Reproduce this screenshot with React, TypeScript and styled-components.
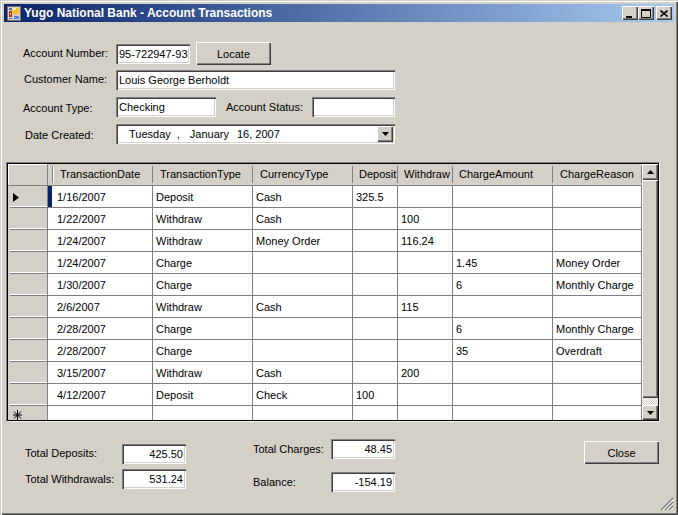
import { Fragment } from "react";
import { createGlobalStyle, styled } from "styled-components";

const GlobalStyle = createGlobalStyle`
  html, body {
    margin: 0;
    padding: 0;
    background: #d4d0c8;
  }
  body {
    font-family: "Liberation Sans", Arial, sans-serif;
    font-size: 11px;
    color: #000;
  }
`;

const raised = `
  background: #d4d0c8;
  box-shadow: inset 1px 1px 0 #fff, inset -1px -1px 0 #404040, inset -2px -2px 0 #808080;
`;

const Window = styled.div`
  position: relative;
  box-sizing: border-box;
  width: 678px;
  height: 515px;
  padding: 3px 2px 1px 3px;
  background: #d4d0c8;
  box-shadow: inset 1px 1px 0 #d4d0c8, inset 2px 2px 0 #fff, inset -1px -1px 0 #404040, inset -2px -2px 0 #808080;
  display: flex;
  flex-direction: column;
`;

const TitleBar = styled.div`
  margin: 1px 0 0 1px;
  width: 670px;
  height: 18px;
  flex: none;
  display: flex;
  align-items: center;
  padding-left: 3px;
  box-sizing: border-box;
  background: linear-gradient(to right, #0a246a, #a6caf0);
`;

const Title = styled.span`
  margin-left: 3px;
  font-size: 12px;
  font-weight: bold;
  color: #fff;
  white-space: nowrap;
  flex: 1;
`;

const CaptionButtons = styled.div`
  display: flex;
  margin-right: 2px;
`;

const CaptionButton = styled.div<{ $gap?: number }>`
  ${raised}
  width: 16px;
  height: 14px;
  margin-left: ${(p) => p.$gap ?? 0}px;
  display: flex;
  align-items: center;
  justify-content: center;
`;

const Form = styled.div`
  padding: 20px 0 0 1px;
  display: flex;
  flex-direction: column;
  height: 140px;
  box-sizing: border-box;
  flex: none;
`;

const FormRow = styled.div<{ $top?: number; $height?: number }>`
  display: flex;
  align-items: center;
  height: ${(p) => p.$height ?? 20}px;
  margin-top: ${(p) => p.$top ?? 0}px;
`;

const Label = styled.label<{ $left: number; $width: number; $nudge?: number }>`
  box-sizing: border-box;
  width: ${(p) => p.$width}px;
  padding-left: ${(p) => p.$left}px;
  margin-top: ${(p) => p.$nudge ?? 0}px;
  white-space: nowrap;
  flex: none;
`;

const TextBox = styled.div<{ $width: number; $right?: boolean }>`
  box-sizing: border-box;
  width: ${(p) => p.$width}px;
  height: 20px;
  flex: none;
  padding: 0 ${(p) => (p.$right ? 3 : 2)}px 0 3px;
  line-height: 20px;
  text-align: ${(p) => (p.$right ? "right" : "left")};
  white-space: nowrap;
  overflow: hidden;
  background: #fff;
  box-shadow: inset 1px 1px 0 #808080, inset 2px 2px 0 #404040, inset -1px -1px 0 #fff, inset -2px -2px 0 #d4d0c8;
`;

const PushButton = styled.button<{ $width: number; $height: number; $left?: number }>`
  ${raised}
  width: ${(p) => p.$width}px;
  height: ${(p) => p.$height}px;
  margin-left: ${(p) => p.$left ?? 0}px;
  border: 0;
  padding: 0;
  font: inherit;
  color: #000;
  flex: none;
`;

const DateBox = styled(TextBox)`
  display: flex;
  align-items: center;
  padding-left: 13px;
`;

const DatePart = styled.span<{ $gap?: number }>`
  margin-left: ${(p) => p.$gap ?? 0}px;
  white-space: nowrap;
`;

const DropButton = styled.div`
  ${raised}
  width: 16px;
  height: 16px;
  margin-left: auto;
  display: flex;
  align-items: center;
  justify-content: center;
  flex: none;
`;

const GridFrame = styled.div`
  margin: 0 0 0 3px;
  width: 654px;
  height: 260px;
  box-sizing: border-box;
  flex: none;
  display: flex;
  border: 1px solid;
  border-color: #808080 #f4f2ee #f4f2ee #808080;
  padding: 1px;
  background: #fff;
  box-shadow: inset 0 0 0 1px #000;
`;

const Table = styled.div`
  width: 634px;
  display: grid;
  grid-template-columns: 40px 105px 100px 100px 45px 55px 100px 89px;
  grid-template-rows: 22px repeat(10, 22px) 14px;
  flex: none;
`;

const HeaderCell = styled.div<{ $pad: number; $first?: boolean }>`
  position: relative;
  box-sizing: border-box;
  padding: 0 0 1px ${(p) => p.$pad}px;
  display: flex;
  align-items: center;
  white-space: nowrap;
  background: #d4d0c8;
  border-bottom: 1px solid #808080;
  &::after {
    content: "";
    position: absolute;
    top: 2px;
    bottom: 2px;
    right: 0;
    width: 1px;
    background: #808080;
  }
  ${(p) =>
    p.$first &&
    `&::before {
      content: "";
      position: absolute;
      top: 2px;
      bottom: 2px;
      left: 4px;
      width: 1px;
      background: #808080;
      border-right: 1px solid #fff;
    }`}
`;

const Corner = styled.div`
  background: #d4d0c8;
  border-right: 1px solid #808080;
  border-bottom: 1px solid #808080;
  box-shadow: inset 1px 1px 0 #fff;
`;

const RowHead = styled.div<{ $last?: boolean }>`
  position: relative;
  box-sizing: border-box;
  background: #d4d0c8;
  border-right: 1px solid #808080;
  display: flex;
  align-items: center;
  padding-left: 5px;
  overflow: hidden;
  ${(p) =>
    !p.$last &&
    `&::after {
      content: "";
      position: absolute;
      left: 2px;
      right: 0;
      bottom: 0;
      height: 1px;
      background: #808080;
      box-shadow: 0 -1px 0 #fff;
    }`}
`;

const Cell = styled.div<{ $first?: boolean; $selected?: boolean; $last?: boolean }>`
  box-sizing: border-box;
  padding-left: ${(p) => (p.$first ? 9 : 3)}px;
  padding-top: 1px;
  display: flex;
  align-items: center;
  white-space: nowrap;
  overflow: hidden;
  background: ${(p) => (p.$selected ? "linear-gradient(to right, #0a246a 4px, #fff 4px)" : "#fff")};
  border-right: 1px solid #808080;
  border-bottom: ${(p) => (p.$last ? "0" : "1px solid #808080")};
`;

const ScrollBar = styled.div`
  width: 16px;
  flex: none;
  display: flex;
  flex-direction: column;
  background: repeating-conic-gradient(#fff 0 25%, #d4d0c8 0 50%) 0 0 / 2px 2px;
`;

const ScrollButton = styled.div<{ $height: number }>`
  ${raised}
  height: ${(p) => p.$height}px;
  flex: none;
  display: flex;
  align-items: center;
  justify-content: center;
`;

const ScrollThumb = styled.div`
  ${raised}
  height: 218px;
  flex: none;
`;

const ScrollTrack = styled.div`
  flex: 1;
`;

const Summary = styled.div`
  flex: 1;
  display: grid;
  grid-template-columns: 228px 331px 75px;
  padding: 17px 0 0 22px;
  align-items: start;
`;

const SummaryColumn = styled.div<{ $top: number; $gap: number }>`
  display: flex;
  flex-direction: column;
  padding-top: ${(p) => p.$top}px;
  gap: ${(p) => p.$gap}px;
`;

const Grip = styled.svg`
  position: absolute;
  right: 4px;
  bottom: 4px;
`;

const columns = [
  "TransactionDate",
  "TransactionType",
  "CurrencyType",
  "Deposit",
  "Withdraw",
  "ChargeAmount",
  "ChargeReason",
];
const headerPads = [12, 7, 7, 6, 6, 6, 7];

const rows = [
  ["1/16/2007", "Deposit", "Cash", "325.5", "", "", ""],
  ["1/22/2007", "Withdraw", "Cash", "", "100", "", ""],
  ["1/24/2007", "Withdraw", "Money Order", "", "116.24", "", ""],
  ["1/24/2007", "Charge", "", "", "", "1.45", "Money Order"],
  ["1/30/2007", "Charge", "", "", "", "6", "Monthly Charge"],
  ["2/6/2007", "Withdraw", "Cash", "", "115", "", ""],
  ["2/28/2007", "Charge", "", "", "", "6", "Monthly Charge"],
  ["2/28/2007", "Charge", "", "", "", "35", "Overdraft"],
  ["3/15/2007", "Withdraw", "Cash", "", "200", "", ""],
  ["4/12/2007", "Deposit", "Check", "100", "", "", ""],
];

const DownArrow = () => (
  <svg width="7" height="4" viewBox="0 0 7 4">
    <path d="M0 0h7L3.5 4z" fill="#000" />
  </svg>
);

const AppIcon = () => (
  <svg width="14" height="15" viewBox="0 0 14 15" style={{ flex: "none" }}>
    <rect x="0.5" y="0.5" width="13" height="14" fill="#d4d0c8" stroke="#707070" />
    <rect x="2" y="2" width="3" height="2" fill="#5a6a90" />
    <rect x="2" y="5" width="3" height="6" fill="#c83020" />
    <rect x="3" y="7" width="1" height="2" fill="#e8e080" />
    <rect x="6" y="2" width="6" height="6" fill="#f4c020" />
    <rect x="6" y="2" width="3" height="2" fill="#fff0a0" />
    <rect x="7" y="10" width="5" height="3" fill="#5088d8" />
    <rect x="2" y="12" width="3" height="1" fill="#5a6a90" />
  </svg>
);

export default function App() {
  return (
    <>
      <GlobalStyle />
      <Window>
        <TitleBar>
          <AppIcon />
          <Title>Yugo National Bank - Account Transactions</Title>
          <CaptionButtons>
            <CaptionButton>
              <svg width="8" height="9" viewBox="0 0 8 9">
                <rect x="0" y="7" width="6" height="2" fill="#000" />
              </svg>
            </CaptionButton>
            <CaptionButton>
              <svg width="10" height="9" viewBox="0 0 10 9">
                <path d="M0.5 1.5h9v7h-9z" fill="none" stroke="#000" />
                <rect x="0" y="0" width="10" height="2" fill="#000" />
              </svg>
            </CaptionButton>
            <CaptionButton $gap={2}>
              <svg width="8" height="7" viewBox="0 0 8 7">
                <path d="M0.5 0.5L7.5 6.5M7.5 0.5L0.5 6.5" stroke="#000" strokeWidth="1.6" />
              </svg>
            </CaptionButton>
          </CaptionButtons>
        </TitleBar>

        <Form>
          <FormRow $height={23}>
            <Label $left={19} $width={112} $nudge={-2}>Account Number:</Label>
            <TextBox $width={74}>95-722947-93</TextBox>
            <PushButton $width={75} $height={23} $left={6}>Locate</PushButton>
          </FormRow>
          <FormRow $top={5}>
            <Label $left={20} $width={112} $nudge={-2}>Customer Name:</Label>
            <TextBox $width={279}>Louis George Berholdt</TextBox>
          </FormRow>
          <FormRow $top={7}>
            <Label $left={19} $width={112} $nudge={2}>Account Type:</Label>
            <TextBox $width={100}>Checking</TextBox>
            <Label $left={10} $width={96}>Account Status:</Label>
            <TextBox $width={83} />
          </FormRow>
          <FormRow $top={7}>
            <Label $left={21} $width={112} $nudge={2}>Date Created:</Label>
            <DateBox $width={279}>
              <DatePart>Tuesday</DatePart>
              <DatePart $gap={6}>,</DatePart>
              <DatePart $gap={10}>January</DatePart>
              <DatePart $gap={8}>16, 2007</DatePart>
              <DropButton>
                <DownArrow />
              </DropButton>
            </DateBox>
          </FormRow>
        </Form>

        <GridFrame>
          <Table>
            <Corner />
            {columns.map((name, i) => (
              <HeaderCell key={name} $pad={headerPads[i]} $first={i === 0}>
                {name}
              </HeaderCell>
            ))}
            {rows.map((row, r) => (
              <Fragment key={r}>
                <RowHead>
                  {r === 0 && (
                    <svg width="6" height="9" viewBox="0 0 6 9">
                      <path d="M0 0l6 4.5L0 9z" fill="#000" />
                    </svg>
                  )}
                </RowHead>
                {row.map((value, c) => (
                  <Cell key={c} $first={c === 0} $selected={r === 0 && c === 0}>
                    {value}
                  </Cell>
                ))}
              </Fragment>
            ))}
            <RowHead $last>
              <svg width="9" height="14" viewBox="0 0 9 14" style={{ flex: "none" }}>
                <path d="M4.5 4v10M0 9h9M1 5.5l7 7M8 5.5l-7 7" stroke="#000" strokeWidth="1" />
              </svg>
            </RowHead>
            {columns.map((name, c) => (
              <Cell key={name} $first={c === 0} $last />
            ))}
          </Table>
          <ScrollBar>
            <ScrollButton $height={16}>
              <svg width="7" height="4" viewBox="0 0 7 4">
                <path d="M3.5 0L7 4H0z" fill="#000" />
              </svg>
            </ScrollButton>
            <ScrollThumb />
            <ScrollTrack />
            <ScrollButton $height={15}>
              <DownArrow />
            </ScrollButton>
          </ScrollBar>
        </GridFrame>

        <Summary>
          <SummaryColumn $top={5} $gap={5}>
            <FormRow>
              <Label $left={0} $width={97} $nudge={-2}>Total Deposits:</Label>
              <TextBox $width={64} $right>425.50</TextBox>
            </FormRow>
            <FormRow>
              <Label $left={0} $width={97} $nudge={-1}>Total Withdrawals:</Label>
              <TextBox $width={64} $right>531.24</TextBox>
            </FormRow>
          </SummaryColumn>
          <SummaryColumn $top={0} $gap={13}>
            <FormRow>
              <Label $left={0} $width={78}>Total Charges:</Label>
              <TextBox $width={64} $right>48.45</TextBox>
            </FormRow>
            <FormRow>
              <Label $left={0} $width={78}>Balance:</Label>
              <TextBox $width={64} $right>-154.19</TextBox>
            </FormRow>
          </SummaryColumn>
          <SummaryColumn $top={2} $gap={0}>
            <PushButton $width={75} $height={23}>Close</PushButton>
          </SummaryColumn>
        </Summary>

        <Grip width="14" height="14" viewBox="0 0 14 14">
          <path d="M13 1L1 13M13 5L5 13M13 9L9 13" stroke="#808080" strokeWidth="1.4" />
          <path d="M13 3L3 13M13 7L7 13M13 11L11 13" stroke="#fff" strokeWidth="1" />
        </Grip>
      </Window>
    </>
  );
}
